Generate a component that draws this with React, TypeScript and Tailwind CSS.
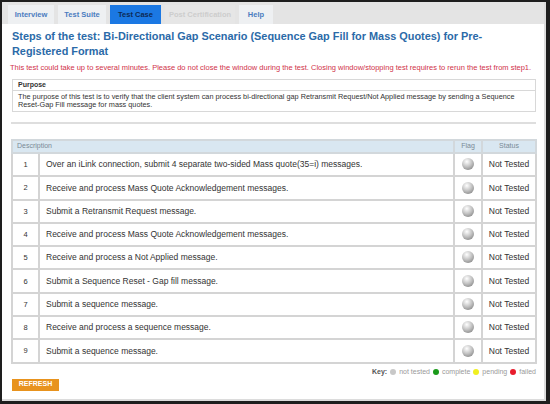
import React from 'react';

const steps = [
  'Over an iLink connection, submit 4 separate two-sided Mass quote(35=i) messages.',
  'Receive and process Mass Quote Acknowledgement messages.',
  'Submit a Retransmit Request message.',
  'Receive and process Mass Quote Acknowledgement messages.',
  'Receive and process a Not Applied message.',
  'Submit a Sequence Reset - Gap fill message.',
  'Submit a sequence message.',
  'Receive and process a sequence message.',
  'Submit a sequence message.',
];

const tabs = [
  { label: 'Interview', cls: 'bg-[#eef0f2] text-[#4a7cc0] w-[46px]' },
  { label: 'Test Suite', cls: 'bg-[#eef0f2] text-[#4a7cc0] w-[48px]' },
  { label: 'Test Case', cls: 'bg-[#1b78e3] text-[#0d2a55] w-[51px]' },
  { label: 'Post Certification', cls: 'bg-[#e6e6e6] text-[#cdcdcd] w-[70px]' },
  { label: 'Help', cls: 'bg-[#eef0f2] text-[#4a7cc0] w-[34px]' },
];

function Ball() {
  return (
    <span className="inline-block w-[12px] h-[12px] rounded-full bg-[radial-gradient(circle_at_40%_30%,#ffffff,#c4c4c4_45%,#727272)]" />
  );
}

function Dot({ color }: { color: string }) {
  return <span className={`inline-block w-[6px] h-[6px] rounded-full ${color}`} />;
}

export default function App() {
  return (
    <div
      className="w-[550px] h-[404px] bg-[#1e1e1e] pt-[2px] pl-[2px] pr-[4px] pb-[3px] [font-variant-ligatures:none]"
      style={{ fontFamily: '"Liberation Sans", Arial, sans-serif' }}
    >
      <div className="h-full bg-white border-r-2 border-b-2 border-[#dcdcdc] flex flex-col">
        {/* Tabs */}
        <div className="h-[22px] bg-[#e4e4e4] flex items-end gap-[4px] pl-[6px] pt-[3px]">
          {tabs.map((t) => (
            <div
              key={t.label}
              className={`h-[19px] flex items-center justify-center text-[7.5px] font-bold ${t.cls}`}
            >
              {t.label}
            </div>
          ))}
        </div>

        <div className="px-[8px] pt-[5px]">
          <h1 className="text-[10.9px] leading-[15px] font-bold text-[#2b6aa8] pl-[2px] whitespace-nowrap">
            Steps of the test: Bi-Directional Gap Scenario (Sequence Gap Fill for Mass Quotes) for Pre-
            <br />
            Registered Format
          </h1>

          <p className="mt-[5px] text-[7.5px] leading-[8px] text-[#d0324a] whitespace-nowrap">
            This test could take up to several minutes. Please do not close the window during the test. Closing window/stopping test requires to rerun the test from step1.
          </p>

          <div className="mt-[7px] ml-[2px] border border-[#d8d8d8] text-[#333]">
            <div className="h-[11px] px-[5px] flex items-center text-[7px] font-bold border-b border-[#d8d8d8]">
              Purpose
            </div>
            <div className="px-[5px] pt-[2px] pb-[2px] text-[7.3px] leading-[8px]">
              The purpose of this test is to verify that the client system can process bi-directional gap Retransmit Request/Not Applied message by sending a Sequence Reset-Gap Fill message for mass quotes.
            </div>
          </div>

          <div className="mt-[10px] ml-[1px] h-[2px] bg-[#dedede]" />

          <table className="mt-[15px] ml-[1px] w-[526px] border-collapse text-[8.5px] text-[#333]">
            <thead>
              <tr className="h-[13px] bg-[#d9e7f1] text-[#7a8a96] text-[7px]">
                <th colSpan={2} className="text-left font-normal pl-[4px] border-2 border-[#d2d8dc]">
                  Description
                </th>
                <th className="w-[28px] font-normal border-2 border-[#d2d8dc]">Flag</th>
                <th className="w-[54px] font-normal border-2 border-[#d2d8dc]">Status</th>
              </tr>
            </thead>
            <tbody>
              {steps.map((s, i) => (
                <tr key={i} className="h-[23.3px]">
                  <td className="w-[27px] text-center text-[7.5px] border-2 border-[#d4d4d4]">{i + 1}</td>
                  <td className="pl-[6px] border-2 border-[#d4d4d4]">{s}</td>
                  <td className="text-center border-2 border-[#d4d4d4] pt-[3px]">
                    <Ball />
                  </td>
                  <td className="text-center border-2 border-[#d4d4d4]">Not Tested</td>
                </tr>
              ))}
            </tbody>
          </table>

          <div className="mt-[4px] flex justify-end items-center gap-[3px] text-[7px] leading-[8px] text-[#9a9a9a]">
            <span className="font-bold text-[#555]">Key:</span>
            <Dot color="bg-[#c8c8c8]" />
            <span>not tested</span>
            <Dot color="bg-[#1a9a1a]" />
            <span>complete</span>
            <Dot color="bg-[#f0f020]" />
            <span>pending</span>
            <Dot color="bg-[#e81c2c]" />
            <span>failed</span>
          </div>

          <button className="mt-[3px] ml-[2px] h-[12px] w-[47px] bg-[#e8931e] text-white text-[7px] font-bold flex items-center justify-center">
            REFRESH
          </button>
        </div>
      </div>
    </div>
  );
}
